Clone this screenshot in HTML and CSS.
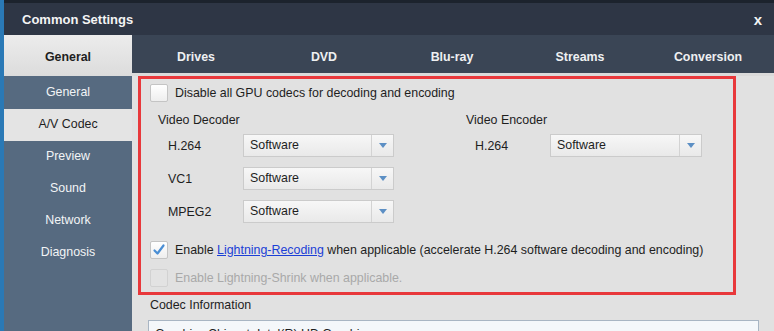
FILE: index.html
```html
<!DOCTYPE html>
<html lang="en">
<head>
    <meta charset="UTF-8">
    <title>Common Settings</title>
    <link rel="stylesheet" href="styles.css">
</head>
<body>
    <div class="window">
        <div class="titlebar">
            <span class="title">Common Settings</span>
            <span class="close">x</span>
        </div>
        <div class="frame">
            <div class="corner-tab">General</div>
            <nav class="tabs">
                <span class="tab">Drives</span>
                <span class="tab">DVD</span>
                <span class="tab">Blu-ray</span>
                <span class="tab">Streams</span>
                <span class="tab">Conversion</span>
            </nav>
            <ul class="sidebar">
                <li>General</li>
                <li class="active">A/V Codec</li>
                <li>Preview</li>
                <li>Sound</li>
                <li>Network</li>
                <li>Diagnosis</li>
            </ul>
            <main class="content">
                <section class="codec-box">
                    <label class="check-row">
                        <span class="checkbox"></span>
                        <span>Disable all GPU codecs for decoding and encoding</span>
                    </label>
                    <div class="codec-columns">
                        <div class="codec-col decoder">
                            <div class="group-label">Video Decoder</div>
                            <div class="codec-row">
                                <span class="codec-name">H.264</span>
                                <div class="select"><span class="value">Software</span><span class="arrow"></span></div>
                            </div>
                            <div class="codec-row">
                                <span class="codec-name">VC1</span>
                                <div class="select"><span class="value">Software</span><span class="arrow"></span></div>
                            </div>
                            <div class="codec-row">
                                <span class="codec-name">MPEG2</span>
                                <div class="select"><span class="value">Software</span><span class="arrow"></span></div>
                            </div>
                        </div>
                        <div class="codec-col encoder">
                            <div class="group-label">Video Encoder</div>
                            <div class="codec-row">
                                <span class="codec-name">H.264</span>
                                <div class="select wide"><span class="value">Software</span><span class="arrow"></span></div>
                            </div>
                        </div>
                    </div>
                    <label class="check-row lightning">
                        <span class="checkbox checked">
                            <svg width="14" height="14" viewBox="0 0 14 14"><path d="M2.5 7.5 L5.5 10.5 L11.5 2.5" fill="none" stroke="#4a8ed4" stroke-width="2.2" stroke-linecap="round" stroke-linejoin="round"/></svg>
                        </span>
                        <span>Enable <a href="#" class="link">Lightning-Recoding</a> when applicable (accelerate H.264 software decoding and encoding)</span>
                    </label>
                    <label class="check-row disabled">
                        <span class="checkbox"></span>
                        <span>Enable Lightning-Shrink when applicable.</span>
                    </label>
                </section>
                <div class="info-label">Codec Information</div>
                <div class="info-box">Graphics Chipset: Intel(R) HD Graphics</div>
            </main>
        </div>
    </div>
</body>
</html>
```

FILE: styles.css
```css
body {
    margin: 0;
    padding: 3px 0 0 4px;
    height: 331px;
    box-sizing: border-box;
    overflow: hidden;
    font-family: 'Liberation Sans', Arial, sans-serif;
    font-size: 12.4px;
    color: #1e1e1e;
    background: linear-gradient(to right, #2a79b6 4px, #1c232d 4px);
}
.window {
    display: flex;
    flex-direction: column;
    height: 100%;
    background-color: #e1e1e1;
}
.titlebar {
    height: 32px;
    display: flex;
    align-items: center;
    justify-content: space-between;
    padding: 0 12px 0 18px;
    background-color: #2e3645;
    color: #f4f4f4;
}
.title {
    font-size: 13px;
    font-weight: bold;
}
.close {
    font-size: 15px;
    font-weight: bold;
}
.frame {
    flex: 1;
    display: grid;
    grid-template-columns: 128px 1fr;
    grid-template-rows: 41px 1fr;
    min-height: 0;
}
.corner-tab {
    display: flex;
    align-items: center;
    justify-content: center;
    padding-top: 2px;
    font-weight: bold;
    color: #1e1e1e;
    background: linear-gradient(#ececec, #dcdcdc);
}
.tabs {
    display: flex;
    padding-top: 5px;
    background-color: #3a4555;
    border-bottom: 3px solid #dadada;
}
.tab {
    width: 128px;
    display: flex;
    align-items: center;
    justify-content: center;
    font-weight: bold;
    color: #eef0f2;
}
.sidebar {
    list-style: none;
    margin: 0;
    padding: 1px 0 0;
    background-color: #566a80;
}
.sidebar li {
    height: 32px;
    line-height: 31px;
    text-align: center;
    color: #f2f4f6;
}
.sidebar li.active {
    background-color: #e4e4e4;
    color: #1e1e1e;
}
.content {
    padding: 0 0 0 6px;
    overflow: hidden;
}
.codec-box {
    width: 583px;
    border: 3px solid #e8383b;
    padding: 5px 0 5px 9px;
}
.check-row {
    display: flex;
    align-items: center;
    gap: 7px;
    height: 18px;
}
.checkbox {
    width: 16px;
    height: 16px;
    border: 1px solid #c4c4c4;
    border-radius: 2px;
    background: linear-gradient(#ffffff, #eeeeee);
    display: flex;
    align-items: center;
    justify-content: center;
}
.check-row.disabled {
    color: #a9a9a9;
    margin-top: 10px;
}
.check-row.disabled .checkbox {
    background: #e3e3e3;
    border-color: #d2d2d2;
}
.check-row.lightning {
    margin-top: 18px;
}
.link {
    color: #1b3fd6;
}
.codec-columns {
    display: flex;
    margin-top: 10px;
    padding-left: 8px;
}
.codec-col.decoder {
    width: 308px;
}
.group-label {
    height: 16px;
    line-height: 16px;
    margin-bottom: 6px;
}
.codec-row {
    display: flex;
    align-items: center;
    margin-bottom: 10px;
    padding-left: 10px;
}
.encoder .codec-row {
    padding-left: 9px;
}
.codec-name {
    width: 75px;
}
.select {
    width: 149px;
    height: 21px;
    display: flex;
    border: 1px solid #cbcbcb;
    background: linear-gradient(#f7f7f7, #e9e9e9);
}
.select.wide {
    width: 150px;
}
.value {
    flex: 1;
    line-height: 21px;
    padding-left: 6px;
}
.arrow {
    width: 21px;
    border-left: 1px solid #d3d3d3;
    display: flex;
    align-items: center;
    justify-content: center;
}
.arrow::after {
    content: "";
    border-left: 4px solid transparent;
    border-right: 4px solid transparent;
    border-top: 5px solid #5c8fc4;
}
.codec-row:last-child {
    margin-bottom: 0;
}
.info-label {
    margin: 2px 0 0 12px;
    height: 16px;
    line-height: 16px;
}
.info-box {
    margin: 7px 0 0 10px;
    width: 597px;
    height: 40px;
    padding: 6px 6px;
    border: 1px solid #a8b5c3;
    background-color: #f4f7fa;
}
```
